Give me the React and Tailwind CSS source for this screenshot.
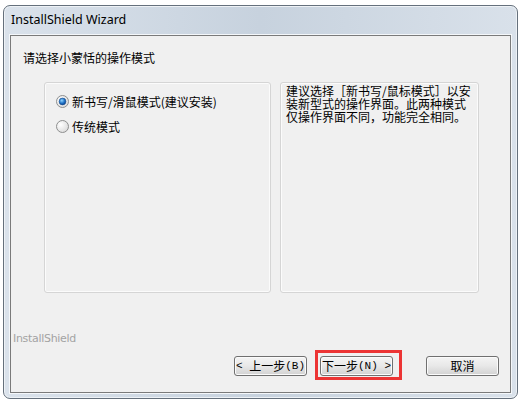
import React from "react";

const cjk = "font-['SimSun','Noto_Sans_CJK_SC',sans-serif]";
const mono = "font-['Liberation_Mono',monospace] text-[11px]";

const Radio = ({ checked }) => (
  <svg width="13" height="13" viewBox="0 0 13 13" aria-hidden="true">
    <defs>
      <radialGradient id="rbg" cx="0.35" cy="0.35" r="0.8">
        <stop offset="0" stopColor="#ffffff" />
        <stop offset="1" stopColor="#d6d6d6" />
      </radialGradient>
      <radialGradient id="rdot" cx="0.4" cy="0.35" r="0.7">
        <stop offset="0" stopColor="#8fd4ff" />
        <stop offset="0.6" stopColor="#1d6fc4" />
        <stop offset="1" stopColor="#0b3f86" />
      </radialGradient>
    </defs>
    <circle cx="6.5" cy="6.5" r="6" fill="url(#rbg)" stroke="#8e8f8f" strokeWidth="1" />
    {checked && <circle cx="6.5" cy="6.5" r="3.4" fill="url(#rdot)" stroke="#1a4d8f" strokeWidth="0.6" />}
  </svg>
);

const Button = ({ children }) => (
  <div
    className={`w-[73px] h-[20px] flex items-center justify-center rounded-[3px] border border-[#707070] bg-gradient-to-b from-[#f4f4f4] via-[#e8e8e8] to-[#d2d2d2] text-[12px] leading-none text-black shadow-[inset_0_0_0_1px_#fbfbfb] whitespace-pre ${cjk}`}
  >
    {children}
  </div>
);

export default function App() {
  return (
    <div className="w-[523px] h-[403px] bg-white pt-[5px] pl-[3px]">
      <div className="w-[515px] h-[394px] rounded-[7px] border border-[#65707c] bg-gradient-to-r from-[#dae2eb] via-[#c7d2de] to-[#d9e1ea] shadow-[inset_0_0_0_1px_#eef2f6] flex flex-col">
        <div className="h-[29px] pl-[7px] pt-[5px] text-[12.5px] text-black font-['Noto_Sans',sans-serif]">
          InstallShield Wizard
        </div>
        <div className="mx-[6px] h-[358px] border border-[#7a7a7a] bg-[#f0f0f0] flex flex-col shadow-[0_0_0_1px_#f4f7fa]">
          <div className={`pl-[12px] pt-[14px] text-[12px] leading-[16px] text-black ${cjk}`}>
            请选择小蒙恬的操作模式
          </div>
          <div className="flex gap-[9px] pl-[33px] mt-[16px]">
            <div className="w-[227px] h-[211px] rounded-[3px] border border-[#d5d5d5] shadow-[inset_0_0_0_1px_#fbfbfb] flex flex-col gap-[12px] pl-[11px] pt-[12px]">
              <div className={`flex items-center gap-[3px] text-[12px] leading-[13px] ${cjk}`}>
                <Radio checked />
                <span>新书写/滑鼠模式(建议安装)</span>
              </div>
              <div className={`flex items-center gap-[3px] text-[12px] leading-[13px] ${cjk}`}>
                <Radio />
                <span>传统模式</span>
              </div>
            </div>
            <div className={`w-[199px] h-[211px] rounded-[3px] border border-[#d5d5d5] shadow-[inset_0_0_0_1px_#fbfbfb] pl-[5px] pt-[1px] text-[12px] leading-[13px] text-black ${cjk}`}>
              <div>建议选择［新书写/鼠标模式］以安</div>
              <div>装新型式的操作界面。此两种模式</div>
              <div>仅操作界面不同，功能完全相同。</div>
            </div>
          </div>
          <div className="pl-[2px] mt-[39px] text-[11px] leading-[13px] text-[#a3a3a3] font-['DejaVu_Sans',sans-serif] tracking-[-0.3px]">
            InstallShield
          </div>
          <div className="flex justify-end pr-[11px] mt-[11px]">
            <Button>
              <span className={mono}>{"< "}</span>上一步<span className={mono}>(B)</span>
            </Button>
            <div className="relative ml-[13px]">
              <Button>
                下一步<span className={mono}>{"(N) >"}</span>
              </Button>
              <div className="absolute left-[-5px] top-[-6px] w-[87px] h-[30px] border-[3px] border-[#ec3434]" />
            </div>
            <div className="ml-[33px]">
              <Button>取消</Button>
            </div>
          </div>
        </div>
      </div>
    </div>
  );
}
